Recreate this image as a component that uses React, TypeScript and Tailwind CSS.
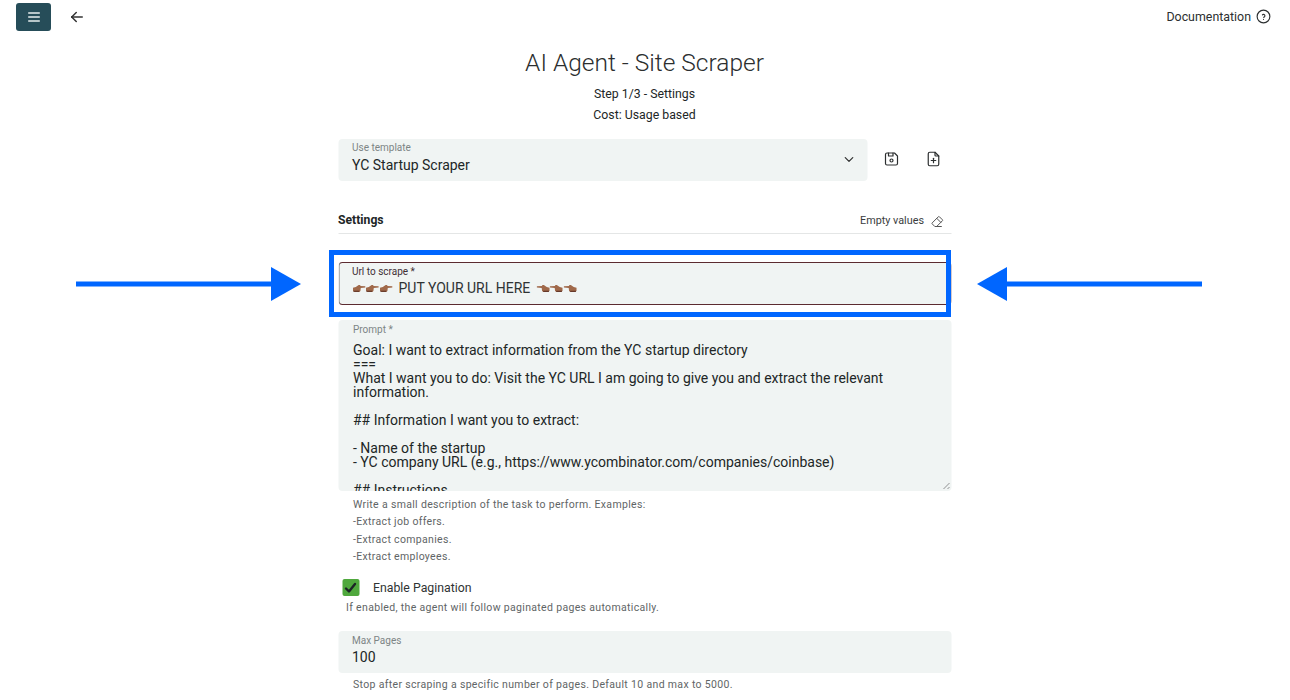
import {
  TbArrowLeft,
  TbChevronDown,
  TbDeviceFloppy,
  TbEraser,
  TbFilePlus,
  TbHelpCircle,
  TbMenu2,
} from 'react-icons/tb'

function Hand({ flip }: { flip?: boolean }) {
  return (
    <svg viewBox="0 0 14 9" className={`h-[9px] w-[13.5px] ${flip ? '-scale-x-100' : ''}`} aria-hidden="true">
      <path d="M0.5 3.6 L3.4 3 L6.4 0.8 L8 0.8 L8.2 2 L13.6 2.2 L13.6 3.4 L8.6 4 L8.2 7 L7 8 L2.4 8 L0.5 7 Z" fill="#a0694a" />
      <path d="M1 7.4 L7 7.4" stroke="#5a2f22" strokeWidth="1.1" />
    </svg>
  )
}

function Hands({ flip }: { flip?: boolean }) {
  return (
    <span className="flex items-center">
      <Hand flip={flip} />
      <Hand flip={flip} />
      <Hand flip={flip} />
    </span>
  )
}

function BlueArrow({ flip, className }: { flip?: boolean; className: string }) {
  return (
    <svg viewBox="0 0 225 34" className={`absolute h-[34px] w-[225px] ${flip ? '-scale-x-100' : ''} ${className}`} aria-hidden="true">
      <rect x="0" y="14.5" width="196" height="5" fill="#0066ff" />
      <path d="M195 0 L225 17 L195 34 Z" fill="#0066ff" />
    </svg>
  )
}

const promptLines = [
  'Goal: I want to extract information from the YC startup directory',
  '===',
  'What I want you to do: Visit the YC URL I am going to give you and extract the relevant information.',
  '',
  '## Information I want you to extract:',
  '',
  '- Name of the startup',
  '- YC company URL (e.g., https://www.ycombinator.com/companies/coinbase)',
  '',
  '## Instructions',
]

export default function App() {
  return (
    <div className="relative h-[700px] overflow-hidden bg-white font-['Roboto',sans-serif] text-[#212626]">
      <header className="flex h-[34px] items-center justify-between pr-[18px] pl-4">
        <div className="flex items-center gap-[17px]">
          <button type="button" className="flex h-[28px] w-[35px] items-center justify-center rounded-[3px] bg-[#264d59] text-[#e8eeee]" aria-label="Menu">
            <TbMenu2 className="h-4 w-4" />
          </button>
          <TbArrowLeft className="h-[18px] w-[18px] text-[#333]" />
        </div>
        <div className="flex items-center gap-[4px] text-[12.4px] text-[#2c2f30]">
          <span>Documentation</span>
          <TbHelpCircle className="h-[17px] w-[17px]" strokeWidth={1.6} />
        </div>
      </header>

      <main className="mx-auto w-[613px] translate-x-[-0.5px]">
        <h1 className="mt-[14px] text-center text-[24.5px] leading-[30px] font-light text-[#2b2e2f]">AI Agent - Site Scraper</h1>
        <p className="mt-[6px] text-center text-[12.3px] leading-[21px]">Step 1/3 - Settings</p>
        <p className="text-center text-[12.3px] leading-[21px]">Cost: Usage based</p>

        <div className="mt-[13px] flex items-center">
          <div className="relative h-[42px] w-[529px] rounded-[4px] bg-[#f0f4f3] pl-[14px]">
            <div className="pt-[4px] text-[10px] leading-[10px] text-[#7d8585]">Use template</div>
            <div className="mt-[2px] text-[14px] leading-[20px]">YC Startup Scraper</div>
            <TbChevronDown className="absolute top-[13px] right-[11px] h-[15px] w-[15px] text-[#333]" />
          </div>
          <TbDeviceFloppy className="ml-[15px] h-[18px] w-[18px] -translate-y-[1px] text-[#2c2f30]" strokeWidth={1.6} />
          <TbFilePlus className="ml-[24px] h-[18px] w-[18px] -translate-y-[1px] text-[#2c2f30]" strokeWidth={1.6} />
        </div>

        <div className="mt-[30px] flex h-[23px] items-start justify-between border-b border-[#e4e6e6] pr-[7px]">
          <span className="text-[12.2px] leading-[18px] font-bold">Settings</span>
          <span className="flex items-center gap-[5px] text-[10.8px] leading-[20px] text-[#3a3d3e]">
            Empty values
            <TbEraser className="h-[15px] w-[15px] text-[#555]" strokeWidth={1.6} />
          </span>
        </div>

        <div className="mt-[28px] h-[43px] rounded-[4px] border border-[#5c2b30] border-l-[#777] bg-[#f0f4f3] pl-[13px]">
          <div className="pt-[4px] text-[10px] leading-[10px] text-[#3f3035]">Url to scrape *</div>
          <div className="mt-[1px] flex items-center gap-[6px] text-[14px] leading-[20px] text-[#2f3333]">
            <Hands />
            <span>PUT YOUR URL HERE</span>
            <Hands flip />
          </div>
        </div>

        <div className="relative mt-[15px] h-[171px] overflow-hidden rounded-[4px] bg-[#f0f4f3] pr-[60px] pl-[15px]">
          <div className="pt-[5px] text-[10px] leading-[10px] text-[#7d8585]">Prompt *</div>
          <div className="mt-[8px] text-[14px] leading-[14px]">
            {promptLines.map((line, i) => (
              <p key={i} className="min-h-[14px]">{line}</p>
            ))}
          </div>
          <svg viewBox="0 0 8 8" className="absolute right-[1px] bottom-[1px] h-2 w-2" aria-hidden="true">
            <path d="M1 7 L7 1 M5 7 L7 5" stroke="#777" strokeWidth="0.8" />
          </svg>
        </div>

        <div className="mt-[4.5px] pl-[15px] text-[10.5px] leading-[17.5px] tracking-[0.33px] text-[#5f6566]">
          <p>Write a small description of the task to perform. Examples:</p>
          <p>-Extract job offers.</p>
          <p>-Extract companies.</p>
          <p>-Extract employees.</p>
        </div>

        <div className="mt-[13.5px] flex items-center pl-[4px]">
          <span className="flex h-[17px] w-[17px] items-center justify-center rounded-[2px] bg-[#4fa83d]">
            <svg viewBox="0 0 14 14" className="h-[14px] w-[14px]" aria-hidden="true">
              <path d="M2.5 7.5 L5.5 10.5 L11.5 3" fill="none" stroke="#1c2426" strokeWidth="2.4" strokeLinecap="round" strokeLinejoin="round" />
            </svg>
          </span>
          <span className="ml-[14px] translate-y-[1px] text-[12.3px] leading-[17px] text-[#2f3333]">Enable Pagination</span>
        </div>
        <p className="mt-[4px] pl-[8px] text-[10.5px] leading-[16px] tracking-[0.33px] text-[#5f6566]">If enabled, the agent will follow paginated pages automatically.</p>

        <div className="mt-[15px] h-[42px] rounded-[4px] bg-[#f0f4f3] pl-[14px]">
          <div className="pt-[5px] text-[10px] leading-[10px] text-[#7d8585]">Max Pages</div>
          <div className="mt-[1px] text-[14px] leading-[20px]">100</div>
        </div>
        <p className="mt-[5px] pl-[15px] text-[10.5px] leading-[14px] tracking-[0.33px] text-[#5f6566]">Stop after scraping a specific number of pages. Default 10 and max to 5000.</p>
      </main>

      <div className="absolute top-[250px] left-[329px] h-[67px] w-[622px] border-[5px] border-[#0066ff]" />
      <BlueArrow className="top-[267px] left-[76px]" />
      <BlueArrow flip className="top-[267px] left-[977px]" />
    </div>
  )
}
